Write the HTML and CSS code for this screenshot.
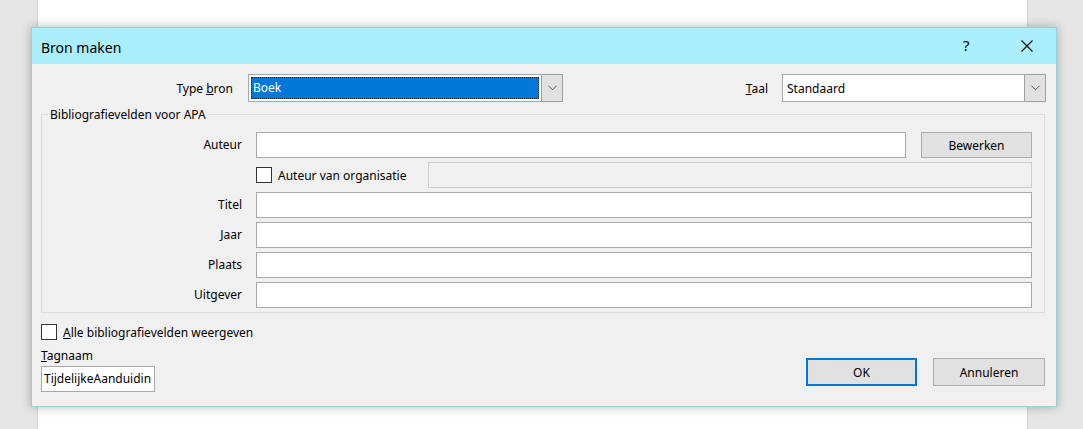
FILE: index.html
```html
<!DOCTYPE html>
<html lang="nl">
<head>
<meta charset="utf-8">
<title>Bron maken</title>
<link rel="stylesheet" href="styles.css">
</head>
<body>
<div class="desk">
  <div class="side-left"></div>
  <div class="page"></div>
  <div class="side-right"></div>
</div>

<div class="dialog">
  <div class="titlebar">
    <span class="title">Bron maken</span>
    <span class="help">?</span>
    <span class="close">
      <svg width="12" height="12" viewBox="0 0 12 12"><path d="M0.5 0.5 L11.5 11.5 M11.5 0.5 L0.5 11.5" stroke="#000" stroke-width="1.1" fill="none"/></svg>
    </span>
  </div>
  <div class="content">
    <div class="toprow">
      <label class="lbl-type">Type <u>b</u>ron</label>
      <div class="select sel-type">
        <div class="sel-value focus"><span class="hl">Boek</span></div>
        <div class="sel-arrow"><svg width="9" height="6" viewBox="0 0 9 6"><path d="M0.5 0.8 L4.5 4.8 L8.5 0.8" stroke="#555" stroke-width="1" fill="none"/></svg></div>
      </div>
      <div class="spacer"></div>
      <label class="lbl-taal"><u>T</u>aal</label>
      <div class="select sel-taal">
        <div class="sel-value"><span class="plain">Standaard</span></div>
        <div class="sel-arrow"><svg width="9" height="6" viewBox="0 0 9 6"><path d="M0.5 0.8 L4.5 4.8 L8.5 0.8" stroke="#555" stroke-width="1" fill="none"/></svg></div>
      </div>
    </div>

    <fieldset class="group">
      <legend>Bibliografievelden voor APA</legend>
      <div class="grid">
        <label class="rl">Auteur</label>
        <div class="rowflex">
          <div class="input auteur"></div>
          <div class="btn bewerken">Bewerken</div>
        </div>

        <div></div>
        <div class="rowflex">
          <span class="check"></span>
          <span class="check-lbl org">Auteur van organisatie</span>
          <div class="input disabled"></div>
        </div>

        <label class="rl">Titel</label>
        <div class="input"></div>

        <label class="rl">Jaar</label>
        <div class="input"></div>

        <label class="rl">Plaats</label>
        <div class="input"></div>

        <label class="rl">Uitgever</label>
        <div class="input"></div>
      </div>
    </fieldset>

    <div class="bottom">
      <div class="leftcol">
        <div class="checkrow">
          <span class="check"></span>
          <span class="check-lbl"><u>A</u>lle bibliografievelden weergeven</span>
        </div>
        <div class="taglbl"><u>T</u>agnaam</div>
        <div class="input tag">TijdelijkeAanduidin</div>
      </div>
      <div class="buttons">
        <div class="btn ok">OK</div>
        <div class="btn cancel">Annuleren</div>
      </div>
    </div>
  </div>
</div>
</body>
</html>
```

FILE: styles.css
```css
* { box-sizing: border-box; }

html, body {
  margin: 0;
  padding: 0;
}

body {
  width: 1083px;
  height: 429px;
  overflow: hidden;
  position: relative;
  font-family: "Noto Sans", "Open Sans", sans-serif;
  font-size: 12px;
  color: #000;
  background: #e6e6e6;
}

.desk {
  display: flex;
  height: 429px;
}

.side-left { width: 37px; background: #e6e6e6; }
.page {
  width: 991px;
  background: #ffffff;
  border-left: 1px solid #d4d4d4;
  border-right: 1px solid #d4d4d4;
}
.side-right { flex: 1; background: #e6e6e6; }

.dialog {
  position: absolute;
  left: 31px;
  top: 27px;
  width: 1026px;
  height: 380px;
  border: 1px solid #98d2d9;
  background: #f0f0f0;
  box-shadow: 0 0 10px rgba(0, 0, 0, 0.28);
  display: flex;
  flex-direction: column;
}

.titlebar {
  height: 36px;
  background: #a9eefa;
  display: flex;
  align-items: center;
  padding-left: 9px;
}

.title {
  font-size: 14px;
  flex: 1;
  position: relative;
  top: 1px;
}

.help {
  font-size: 15px;
  width: 12px;
  margin-right: 46px;
  position: relative;
  top: -1px;
}

.close {
  width: 12px;
  height: 12px;
  margin-right: 23px;
  display: flex;
}

.content {
  flex: 1;
  padding: 10px 10px 0 9px;
  display: flex;
  flex-direction: column;
}

.toprow {
  display: flex;
  align-items: center;
  height: 28px;
}

.lbl-type {
  width: 192px;
  text-align: right;
  margin-right: 15px;
}

.lbl-taal {
  margin-right: 14px;
}

.spacer { flex: 1; }

.select {
  height: 28px;
  border: 1px solid #a8a8a8;
  background: #fff;
  display: flex;
}

.sel-type { width: 315px; }
.sel-taal { width: 264px; }

.sel-value {
  flex: 1;
  padding: 2px;
  display: flex;
}

.sel-value .hl {
  flex: 1;
  background: #0078d7;
  color: #fff;
  padding-left: 2px;
  line-height: 21px;
  outline: 1px dotted #1a2a3a;
  outline-offset: -1px;
}

.sel-value .plain {
  padding-left: 2px;
  line-height: 24px;
}

.sel-arrow {
  width: 22px;
  margin: -1px -1px -1px 0;
  background: #e1e1e1;
  border: 1px solid #a0a0a0;
  display: flex;
  align-items: center;
  justify-content: center;
}

.group {
  margin: 4px 1px 0 0;
  padding: 0 12px 4px 0;
  border: 1px solid #dcdcdc;
  min-width: 0;
}

.group legend {
  margin-left: 6px;
  padding: 0 2px;
  line-height: 17px;
}

.grid {
  display: grid;
  grid-template-columns: 200px 1fr;
  column-gap: 14px;
  row-gap: 4px;
  padding-top: 9px;
}

.rl {
  text-align: right;
  line-height: 26px;
  height: 26px;
}

.rowflex {
  display: flex;
  align-items: center;
  height: 26px;
}

.input {
  height: 26px;
  border: 1px solid #a8a8a8;
  background: #fff;
}

.input.auteur { width: 650px; }

.input.disabled {
  flex: 1;
  background: #f0f0f0;
  border-color: #cccccc;
}

.btn {
  height: 26px;
  border: 1px solid #adadad;
  background: #e1e1e1;
  display: flex;
  align-items: center;
  justify-content: center;
}

.bewerken {
  flex: 1;
  margin-left: 15px;
}

.check {
  width: 16px;
  height: 16px;
  border: 1px solid #333;
  background: #fff;
  flex: none;
}

.check-lbl {
  margin-left: 6px;
}

.org {
  width: 150px;
}

.bottom {
  display: flex;
  justify-content: space-between;
  align-items: flex-end;
  padding-bottom: 14px;
}

.leftcol {
  display: flex;
  flex-direction: column;
}

.checkrow {
  display: flex;
  align-items: center;
  height: 16px;
  margin-top: 11px;
}

.taglbl {
  margin-top: 8px;
  line-height: 16px;
}

.input.tag {
  margin-top: 2px;
  width: 114px;
  line-height: 24px;
  padding-left: 2px;
  white-space: nowrap;
  overflow: hidden;
}

.buttons {
  display: flex;
  gap: 16px;
  margin-bottom: 6px;
  margin-right: 1px;
}

.ok, .cancel {
  height: 28px;
}

.ok {
  width: 111px;
  border: 2px solid #0078d7;
}

.cancel {
  width: 112px;
}
```
